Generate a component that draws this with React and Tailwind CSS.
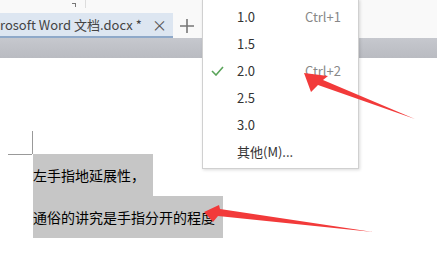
import React from "react";

const rows = [
  { label: "1.0", key: "Ctrl+1" },
  { label: "1.5" },
  { label: "2.0", key: "Ctrl+2", checked: true },
  { label: "2.5" },
  { label: "3.0" },
  { label: "其他(M)..." },
];

const App = () => {
  return (
    <div className="relative w-[437px] h-[271px] overflow-hidden bg-white font-['Noto_Sans_CJK_SC','Open_Sans',sans-serif]">
      {/* tab strip */}
      <div className="h-[38px] bg-[#f9f9f9] flex flex-col">
        <div className="h-[13px] flex items-start">
          <div className="ml-[72px] mt-[3px] w-[4px] h-[4px] border-t border-r border-[#777]" />
          <div className="ml-[9px] w-px h-[8px] bg-[#ddd]" />
        </div>
        <div className="flex items-center h-[25px]">
          <div className="w-[173px] h-[25px] bg-[#dde6f1] border-b-2 border-[#8fa9c9] flex items-center text-[13px] text-[#444]">
            <span className="leading-none">rosoft Word 文档.docx *</span>
            <span className="ml-auto mr-[6px] text-[15px] text-[#555] leading-none">×</span>
          </div>
          <svg className="ml-[7px]" width="14" height="14" viewBox="0 0 14 14">
            <path d="M7 0 V14 M0 7 H14" stroke="#777" strokeWidth="1.6" />
          </svg>
        </div>
      </div>
      {/* toolbar bar */}
      <div className="h-[20px] bg-gradient-to-b from-[#c6c8ce] to-[#b9bbc1]" />

      {/* document */}
      <div className="relative pt-[96px]">
        <div className="absolute left-[32px] top-[73px] w-px h-[23px] bg-[#999]" />
        <div className="absolute left-[8px] top-[96px] w-[24px] h-px bg-[#999]" />
        <div className="pl-[33px] text-[14px] text-black">
          <div className="w-[120px] h-[42px] bg-[#c6c6c6] flex items-center">左手指地延展性，</div>
          <div className="w-[190px] h-[42px] bg-[#c6c6c6] flex items-center">通俗的讲究是手指分开的程度</div>
        </div>
      </div>

      {/* line spacing menu */}
      <div className="absolute left-[202px] top-[-1px] w-[157px] h-[170px] bg-white border border-[#d0d0d0] shadow-[1px_1px_3px_rgba(0,0,0,0.15)] pt-[3px]">
        {rows.map((r) => (
          <div key={r.label} className="h-[27px] flex items-center text-[13px]">
            <span className="w-[34px] pl-[8px]">
              {r.checked ? (
                <svg width="13" height="10" viewBox="0 0 13 10">
                  <path d="M1 5 L5 9 L12 1" fill="none" stroke="#5aa45a" strokeWidth="1.6" />
                </svg>
              ) : null}
            </span>
            <span className="text-[#333]">{r.label}</span>
            {r.key && <span className="ml-auto mr-[17px] text-[#888]">{r.key}</span>}
          </div>
        ))}
      </div>

      {/* red arrows */}
      <svg className="absolute left-0 top-0 pointer-events-none" width="437" height="271">
        <polygon points="304,73 328,76 323,80 415,119 318,85 311,92" fill="#f23a3a" />
        <polygon points="204,212 219,205 220,209 373,232 218,216 213,222" fill="#f23a3a" />
      </svg>
    </div>
  );
};

export default App;
